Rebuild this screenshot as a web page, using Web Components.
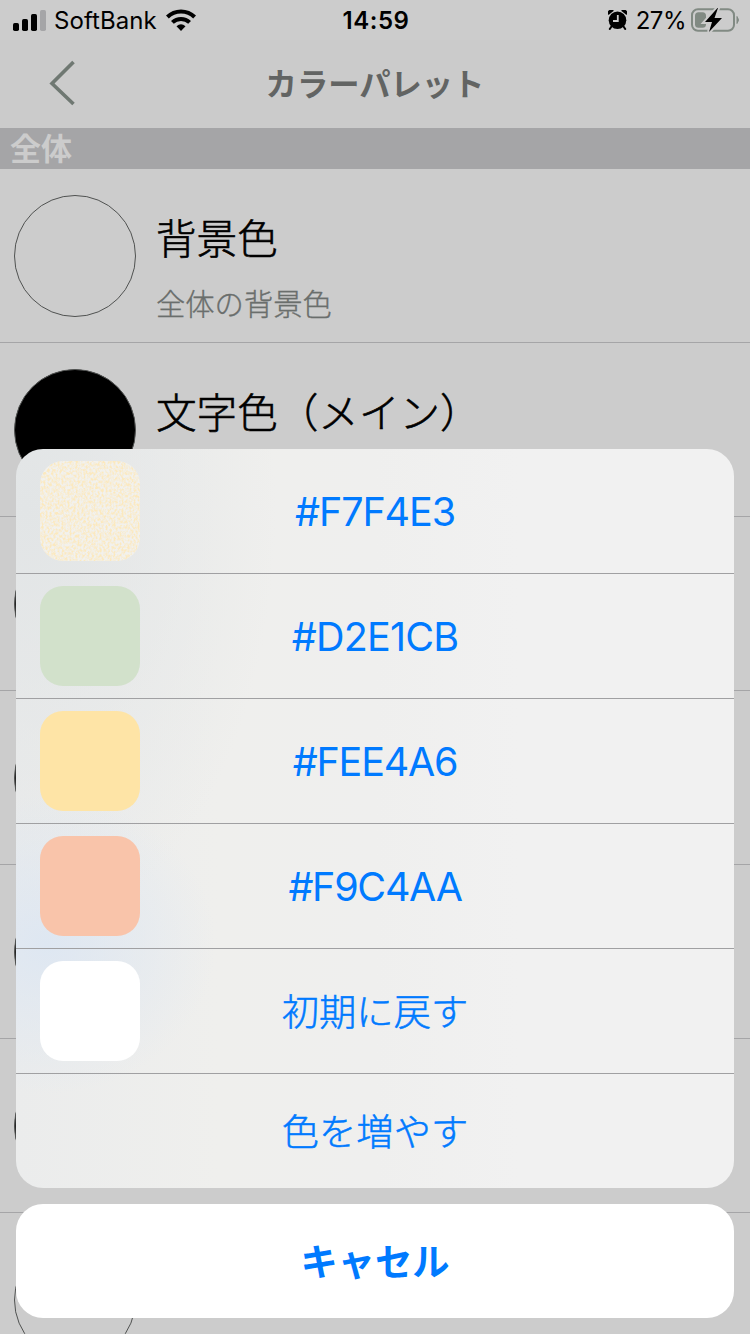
<!DOCTYPE html>
<html lang="ja">
<head>
<meta charset="utf-8">
<title>カラーパレット</title>
<style>
html,body{margin:0;height:100%;overflow:hidden}
body{font-family:Inter,"Noto Sans CJK JP",sans-serif;background:#ccc;color:#000}
</style>
</head>
<body>
<palette-screen></palette-screen>
<script>
const define=(name,html)=>customElements.define(name,class extends HTMLElement{
  constructor(){
    super();
    const t=document.createElement('template');
    t.innerHTML=html;
    this.attachShadow({mode:'open'}).append(t.content.cloneNode(true));
  }
});

define('status-bar',`
<style>
:host{display:grid;grid-template-columns:1fr auto 1fr;align-items:center;height:40px;box-sizing:border-box;padding:0 11px 0 13px;font-size:24px;line-height:40px}
div{display:flex;align-items:center}
.r{justify-content:flex-end}
svg{display:block;flex:none}
span{padding-top:2px;line-height:38px}
.carrier{margin:0 9px 0 8px;letter-spacing:.05px}
.time{font-weight:600;letter-spacing:.55px}
.pct{margin:0 5px 0 9px;letter-spacing:-.5px}
</style>
<div>
<svg width="33" height="22" viewBox="0 0 33 22"><rect x="0" y="14" width="6" height="8" rx="1.7"/><rect x="9" y="10" width="6" height="12" rx="1.7"/><rect x="18" y="5" width="6" height="17" rx="1.7"/><rect x="27" y="1" width="6" height="21" rx="1.7" fill="#a5a5a7"/></svg>
<span class="carrier">SoftBank</span>
<svg width="30" height="22" viewBox="0 0 30 22"><g fill="none" stroke="#000" stroke-width="4"><path d="M1.4 8A19.3 19.3 0 0 1 28.6 8"/><path d="M6.4 13.4A12.4 12.4 0 0 1 23.6 13.4"/></g><path d="M10.5 17.3Q15 13.4 19.5 17.3L15 22Z"/></svg>
</div>
<span class="time">14:59</span>
<div class="r">
<svg width="19" height="20" viewBox="0 0 19 20"><path d="M.5 5A3.2 3.2 0 0 1 5.8.8ZM18.5 5A3.2 3.2 0 0 0 13.2.8Z"/><circle cx="9.5" cy="10.3" r="8.8"/><path d="m3.8 16-2 3m13.4-3 2 3" stroke="#000" stroke-width="2" stroke-linecap="round"/><path d="M9.8 5v6H5" stroke="#ccc" stroke-width="1.8" fill="none"/></svg>
<span class="pct">27%</span>
<svg width="48" height="24" viewBox="0 0 48 24"><rect x="1" y="1.2" width="42" height="21.6" rx="6" fill="none" stroke="#818a83" stroke-width="2"/><rect x="4" y="4.3" width="11" height="15.4" rx="3.5" fill="#818a83"/><path d="M46 8.5q3 3.5 0 7z" fill="#818a83" stroke="#818a83"/><path d="M26.5 0 14 14h7L18 24 31 10h-7.5L27 0Z" stroke="#ccc" stroke-width="4"/><path d="M26.5 0 14 14h7L18 24 31 10h-7.5L27 0Z"/></svg>
</div>`);

define('nav-bar',`
<style>
:host{display:grid;grid-template-columns:125px 1fr 125px;align-items:center;height:88px;background:#cbcbcb}
svg{display:block;margin-left:49px;margin-top:-3px}
h1{margin:0;padding-top:2px;text-align:center;font-size:31.3px;line-height:40px;font-weight:700;color:#626463}
</style>
<svg width="26" height="46" viewBox="0 0 26 46" fill="none" stroke="#6f7872" stroke-width="3.6"><path d="M24.5 2 3 23.5 24.5 44"/></svg>
<h1><slot></slot></h1>`);

define('section-title',`
<style>:host{display:block;height:41px;box-sizing:border-box;padding-left:10px;background:#a5a5a7;color:#ccc;font-size:31px;line-height:41px;font-weight:700}</style>
<slot></slot>`);

define('color-row',`
<style>
:host{display:flex;box-sizing:border-box;height:174px;flex:none;padding:26px 0 0 14px;border-bottom:1px solid #a5a5a7}
i{box-sizing:border-box;width:122px;height:122px;border-radius:50%;border:1px solid #505251;background:var(--color,transparent);flex:none}
div{margin-left:20px}
.t{display:block;font-size:40.6px;font-weight:300;-webkit-text-stroke:.6px;line-height:60px;margin-top:15px;white-space:nowrap;height:60px}
.s{display:block;font-size:29.3px;font-weight:300;-webkit-text-stroke:.35px;line-height:44px;margin-top:13px;color:#6a6e6c}
</style>
<i></i><div><span class="t"><slot></slot></span><span class="s"><slot name="note"></slot></span></div>`);

define('action-item',`
<style>
:host{display:grid;grid-template-columns:100px 1fr 100px;align-items:center;box-sizing:border-box;height:125px;padding:0 24px;border-bottom:1px solid #a0a0a2;color:#007aff;font-size:39.5px;line-height:60px}
:host([jp]){font-size:37.3px;font-weight:300;-webkit-text-stroke:.5px}
:host([last]){height:114px;border:0}
.label{grid-column:2;text-align:center;white-space:nowrap;letter-spacing:var(--track,0);padding-top:2px}
:host([jp]) .label{padding-top:3px}
::slotted(color-swatch){grid-column:1;grid-row:1}
</style>
<slot name="swatch"></slot><span class="label"><slot></slot></span>`);

define('color-swatch',`
<style>
:host{display:block;width:100px;height:100px;border-radius:23px;background:var(--c);overflow:hidden}
svg{display:none}
:host([grain]) svg{display:block}
</style>
<svg width="100" height="100"><filter id="g" x="0" y="0" width="100%" height="100%" color-interpolation-filters="sRGB"><feTurbulence type="fractalNoise" baseFrequency=".5 .35" numOctaves="2" seed="4"/><feColorMatrix values="0 0 0 0 1  0 0 0 0 .9  0 0 0 0 .68  3 0 0 0 -1.15"/></filter><rect width="100" height="100" filter="url(#g)" opacity=".75"/></svg>`);

define('cancel-button',`
<style>:host{display:flex;align-items:center;justify-content:center;height:114px;border-radius:27px;background:#fff;color:#007aff;font-size:37.3px;line-height:60px;font-weight:700}
span{padding-top:4px}</style>
<span><slot></slot></span>`);

define('action-sheet',`
<style>
:host{display:block}
.group{border-radius:27px;overflow:hidden;margin-bottom:16px;background:
radial-gradient(ellipse 170px 150px at 30px 495px,#dee7f2 0,#dee7f200 100%),
radial-gradient(ellipse 250px 430px at 10px 60px,#e2e5e6 0,#e2e5e600 100%),
linear-gradient(90deg,#ebecec,#efefed 28%,#efefee 50%,#f1f1f1 70%)}
</style>
<div class="group"><slot></slot></div><slot name="cancel"></slot>`);

define('palette-screen',`
<style>
:host{display:block;position:relative;height:1334px;overflow:hidden;background:#ccc}
action-sheet{position:absolute;left:16px;right:16px;bottom:16px}
.dark{--color:#222}
</style>
<status-bar></status-bar>
<nav-bar>カラーパレット</nav-bar>
<section-title>全体</section-title>
<color-row>背景色<span slot="note">全体の背景色</span></color-row>
<color-row style="--color:#000">文字色（メイン）</color-row>
<color-row class="dark"></color-row><color-row class="dark"></color-row><color-row class="dark"></color-row><color-row class="dark"></color-row><color-row></color-row>
<action-sheet>
<action-item style="--track:-1.1px"><color-swatch slot="swatch" grain style="--c:#f2f1ed"></color-swatch>#F7F4E3</action-item>
<action-item style="--track:-.8px"><color-swatch slot="swatch" style="--c:#d2e1cb"></color-swatch>#D2E1CB</action-item>
<action-item style="--track:-1.2px"><color-swatch slot="swatch" style="--c:#fee4a6"></color-swatch>#FEE4A6</action-item>
<action-item style="--track:-1.3px"><color-swatch slot="swatch" style="--c:#f9c4aa"></color-swatch>#F9C4AA</action-item>
<action-item jp><color-swatch slot="swatch" style="--c:#fff"></color-swatch>初期に戻す</action-item>
<action-item jp last>色を増やす</action-item>
<cancel-button slot="cancel">キャセル</cancel-button>
</action-sheet>`);
</script>
</body>
</html>
